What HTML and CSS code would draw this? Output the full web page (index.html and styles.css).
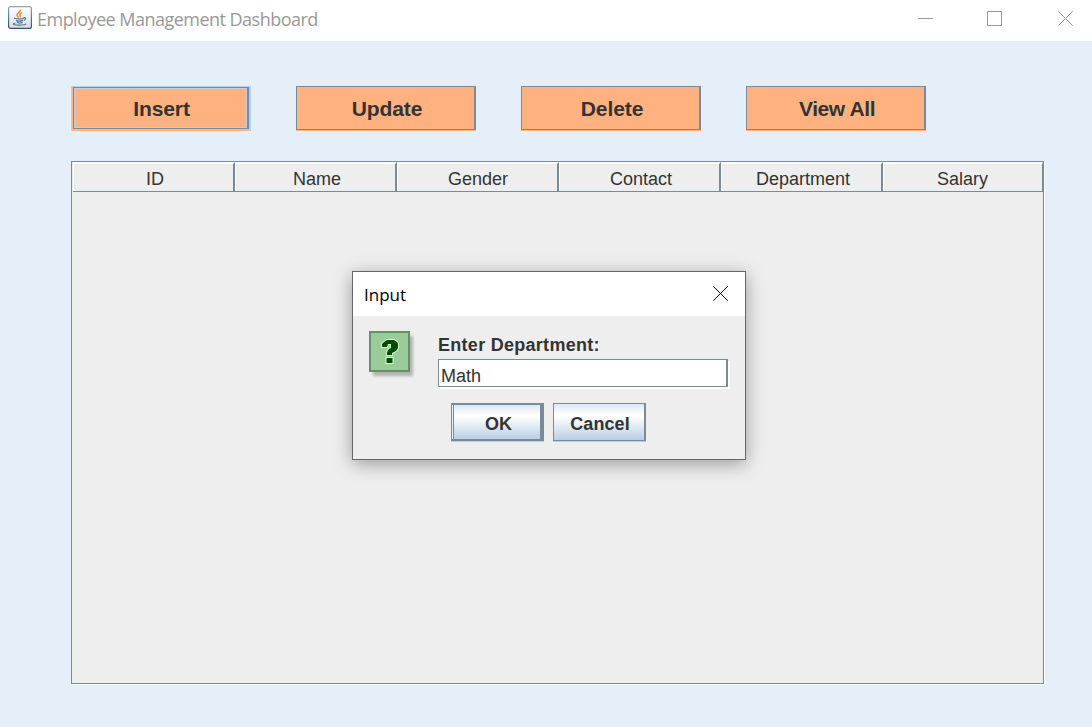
FILE: index.html
```html
<!DOCTYPE html>
<html lang="en">
<head>
<meta charset="utf-8">
<title>Employee Management Dashboard</title>
<link rel="stylesheet" href="styles.css">
</head>
<body>
<header class="titlebar">
  <svg class="app-icon" width="24" height="24" viewBox="0 0 24 24">
    <defs><linearGradient id="tile" x1="0" y1="0" x2="0" y2="1"><stop offset="0" stop-color="#fff"/><stop offset="1" stop-color="#d9dee2"/></linearGradient>
    <linearGradient id="rim" x1="0" y1="0" x2="0" y2="1"><stop offset="0" stop-color="#8ba3b4"/><stop offset="1" stop-color="#31566f"/></linearGradient></defs>
    <rect x=".6" y=".6" width="22.8" height="21.8" rx="2" fill="url(#tile)" stroke="url(#rim)" stroke-width="1.2"/>
    <path d="M12.300 3.700c.9 2.300-3.700 3.300-3.300 5.400.2 1 1.200 1.600 1.700 2.400M14.200 6.600c-1.600.6-2.900 1.400-2.200 2.600.5.7.7 1.300 0 2" fill="none" stroke="#f08a35" stroke-width="1.500"/>
    <path d="M7 11.800c-1.200.6.4 1 4.300 1 2.500 0 4-.2 4.800-.6M8 14.400c1.500.8 5 .8 7 0M9 16.400c1.500.7 4 .6 5.500 0M15.500 11.800c2.400-.8 3 1.600.3 2.700M7.200 17.300c-4 .8-1 1.800 4 1.800 4 0 7.500-.5 6.300-1.500" fill="none" stroke="#4f7994" stroke-width="1.200"/>
  </svg>
  <h1 class="app-title">Employee Management Dashboard</h1>
  <div class="window-controls">
    <svg width="15" height="15" viewBox="0 0 15 15"><path d="M0 7.500h15"/></svg>
    <svg width="15" height="15" viewBox="0 0 15 15"><path d="M.5.5h14v14H.5z"/></svg>
    <svg width="15" height="15" viewBox="0 0 15 15"><path d="M.3.3l14.400 14.400M14.700.3L.3 14.700"/></svg>
  </div>
</header>
<main class="content">
  <nav class="actions">
    <button class="action action-focused"><span>Insert</span></button>
    <button class="action"><span>Update</span></button>
    <button class="action"><span>Delete</span></button>
    <button class="action action-wide-label"><span>View All</span></button>
  </nav>
  <section class="table">
    <div class="table-header">
      <div class="column">ID</div>
      <div class="column">Name</div>
      <div class="column">Gender</div>
      <div class="column">Contact</div>
      <div class="column">Department</div>
      <div class="column">Salary</div>
    </div>
  </section>
</main>
<div class="dialog" role="dialog">
  <div class="dialog-title"><span>Input</span>
    <svg width="15" height="15" viewBox="0 0 15 15"><path d="M.3.3l14.400 14.400M14.700.3L.3 14.700"/></svg>
  </div>
  <div class="dialog-body">
    <svg class="question" width="46" height="48" viewBox="0 0 46 48">
      <rect class="question-shadow" x="4" y="5" width="40" height="40"/>
      <rect x="1" y="1" width="39" height="39" fill="#9c9" stroke="#669066" stroke-width="2"/>
      <g fill="#004d00" stroke="#cfc" stroke-width="2" paint-order="stroke">
        <path d="M13 16v-3l2-2 3-2h7l3 2 1 2v4l-2 3-4 2v2h-5v-3l2-3 2-1v-4h-3l-1 3z"/>
        <path d="M17.500 27h6v5h-6z"/>
      </g>
    </svg>
    <div class="form">
      <label class="label" for="department">Enter Department:</label>
      <input class="field" id="department" value="Math">
    </div>
    <div class="dialog-buttons">
      <button class="push push-default">OK</button>
      <button class="push">Cancel</button>
    </div>
  </div>
</div>
</body>
</html>
```
FILE: styles.css
```css
* { box-sizing: border-box; }
body { margin: 0; width: 1092px; height: 727px; overflow: hidden; display: flex; flex-direction: column; background: #e5effa; color: #333; font-family: "Liberation Sans", Arial, sans-serif; }
svg { display: block; }
button { font-family: inherit; color: inherit; border-radius: 0; margin: 0; padding: 0; }
.titlebar { height: 41px; background: #fff; display: flex; align-items: flex-start; padding: 6px 19px 0 8px; }
.app-title { margin: 1px 0 0 5px; font: 400 18px/25px "Open Sans", "Noto Sans", sans-serif; letter-spacing: -.52px; color: #999; white-space: nowrap; }
.window-controls { margin: 5px 0 0 auto; display: flex; gap: 54px; }
.window-controls svg { fill: none; stroke: #999; stroke-width: 1; }
.window-controls svg:last-child { margin-left: 2px; }
.content { flex: 1; padding: 45px 48px 43px 71px; display: flex; flex-direction: column; gap: 30px; }
.actions { display: flex; gap: 45px; }
.action { width: 180px; height: 45px; border: 0; padding-bottom: 1px; background: #ffb27f; font-size: 21px; font-weight: 700; letter-spacing: -.1px; display: flex; }
.action span { flex: 1; display: flex; align-items: center; justify-content: center; padding: 2px 0 0 3px; border: 1px solid #7a8a99; border-right-width: 2px; }
.action-wide-label { letter-spacing: -.4px; }
.action-focused { border: solid #b8cfe5; border-width: 1px 2px 0 1px; padding: 0 0 1px 1px; }
.action-focused span { padding-left: 2px; box-shadow: inset 0 0 0 1px #b8cfe5, 0 1px #b8cfe5; margin-bottom: 1px; }
.table { flex: 1; border: 1px solid #7a8a99; background: #eee; box-shadow: 1px 1px #fff; padding: 0 0 0 1px; }
.table-header { display: flex; height: 30px; }
.column { width: 162px; padding-left: 4px; border-top: 2px solid #fff; border-right: 2px solid #7a8a99; border-bottom: 1px solid #7a8a99; box-shadow: inset 1px 0 #fff; font-size: 18px; line-height: 30px; text-align: center; }
.column:nth-child(3) { padding-left: 2px; }
.column:last-child { width: auto; flex: 1; padding-left: 0; border-right-width: 1px; }
.dialog { position: absolute; left: 352px; top: 271px; width: 394px; height: 189px; border: 1px solid #666; background: #eee; box-shadow: 0 4px 17px rgba(0, 0, 0, .35); }
.dialog-title { height: 44px; padding: 0 17px 0 11px; background: #fff; color: #000; display: flex; justify-content: space-between; font: 17px/45px "Open Sans", "Noto Sans", sans-serif; }
.dialog-title svg { margin-top: 14px; stroke: #000; stroke-width: 1; }
.dialog-body { display: grid; grid-template-columns: 69px 292px; padding: 15px 0 0 16px; }
.question-shadow { fill: #777; opacity: .5; filter: blur(1.500px); }
.form { display: flex; flex-direction: column; }
.label { height: 28px; font-size: 18px; font-weight: 700; line-height: 29px; letter-spacing: .28px; }
.field { width: 290px; height: 28px; margin: 0; padding: 6px 2px 0; border: 1px solid #7a8a99; border-right-width: 2px; border-radius: 0; background: #fff; box-shadow: 2px 2px #fff; color: #333; font: 18px "Liberation Sans", Arial, sans-serif; outline: none; }
.dialog-buttons { grid-column: 1 / 3; display: flex; gap: 9px; padding: 16px 0 0 82px; }
.push { width: 93px; height: 38px; border: 1px solid #7a8a99; border-right-width: 2px; background: linear-gradient(#dde8f3, #fff 30%, #fff 34%, #b8cfe5); box-shadow: 0 1px #b8cfe5; font-size: 18px; font-weight: 700; letter-spacing: .1px; padding: 5px 0 0 2px; }
.push-default { border-width: 2px 4px 2px 1px; padding-left: 5px; box-shadow: inset 1px 0 #e8f0f8, inset 2px 0 #7a8a99, 0 1px #b8cfe5; }
```
